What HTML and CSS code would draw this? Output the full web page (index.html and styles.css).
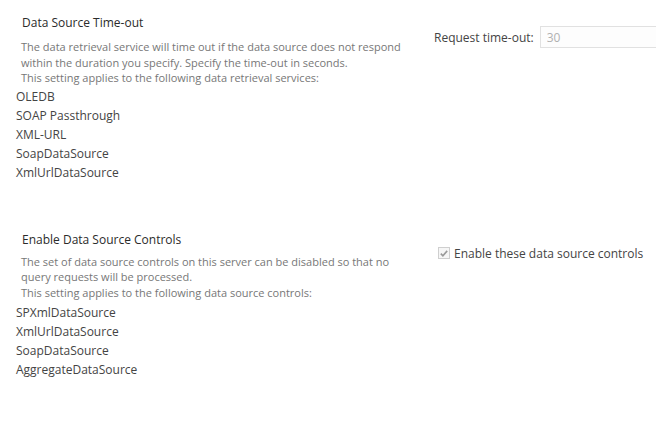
FILE: index.html
```html
<!DOCTYPE html>
<html>
<head>
<meta charset="utf-8">
<link rel="stylesheet" href="styles.css">
</head>
<body>
<div class="page">
  <section class="row first">
    <div class="left">
      <h3 class="title">Data Source Time-out</h3>
      <div class="desc">
        <div>The data retrieval service will time out if the data source does not respond within the duration you specify. Specify the time-out in seconds.</div>
        <div>This setting applies to the following data retrieval services:</div>
      </div>
      <ul class="list">
        <li>OLEDB</li>
        <li>SOAP Passthrough</li>
        <li>XML-URL</li>
        <li>SoapDataSource</li>
        <li>XmlUrlDataSource</li>
      </ul>
    </div>
    <div class="right timeout">
      <label class="field-label" for="to">Request time-out:</label>
      <input id="to" class="field" type="text" value="30" disabled>
    </div>
  </section>
  <section class="row second">
    <div class="left">
      <h3 class="title">Enable Data Source Controls</h3>
      <div class="desc">
        <div>The set of data source controls on this server can be disabled so that no query requests will be processed.</div>
        <div>This setting applies to the following data source controls:</div>
      </div>
      <ul class="list">
        <li>SPXmlDataSource</li>
        <li>XmlUrlDataSource</li>
        <li>SoapDataSource</li>
        <li>AggregateDataSource</li>
      </ul>
    </div>
    <div class="right enable">
      <span class="check"><svg width="11" height="11" viewBox="0 0 11 11"><path d="M2 5.6 L4.3 8 L9 2.6" fill="none" stroke="#9a9a9a" stroke-width="1.8"/></svg></span>
      <span class="check-label">Enable these data source controls</span>
    </div>
  </section>
</div>
</body>
</html>
```

FILE: styles.css
```css
html, body {
  margin: 0;
  padding: 0;
  background: #ffffff;
}
body {
  font-family: "Open Sans", "Noto Sans", sans-serif;
  color: #444444;
  width: 656px;
  height: 421px;
  overflow: hidden;
}
.page {
  display: flex;
  flex-direction: column;
}
.row {
  display: flex;
}
.row.first {
  padding-top: 15px;
}
.row.second {
  padding-top: 50px;
}
.left {
  width: 418px;
  flex: none;
}
.title {
  margin: 0;
  padding-left: 22px;
  font-size: 12px;
  line-height: 16px;
  font-weight: 400;
  color: #2b2b2b;
}
.desc {
  margin-top: 8px;
  padding-left: 21px;
  padding-right: 10px;
  font-size: 11px;
  line-height: 15.5px;
  color: #777777;
}
.second .desc {
  margin-top: 6px;
}
.list {
  list-style: none;
  margin: 1px 0 0 0;
  padding: 0 0 0 16px;
  font-size: 12px;
  line-height: 19px;
  color: #444444;
}
.second .list {
  margin-top: 3px;
}
.right {
  display: flex;
  align-items: center;
  padding-left: 16px;
  flex: none;
  white-space: nowrap;
}
.timeout {
  align-self: flex-start;
  margin-top: 11px;
}
.field-label {
  font-size: 12px;
  color: #444444;
  margin-right: 6px;
}
.field {
  box-sizing: border-box;
  width: 140px;
  height: 22px;
  border: 1px solid #e1e1e1;
  background: #fdfdfd;
  color: #b1b1b1;
  font-family: inherit;
  font-size: 12px;
  padding: 0 6px;
  margin: 0;
  outline: none;
}
.enable {
  align-self: flex-start;
  margin-top: 13px;
  padding-left: 20px;
}
.check {
  box-sizing: border-box;
  width: 12px;
  height: 12px;
  border: 1px solid #cfcfcf;
  background: #f6f6f6;
  display: flex;
  align-items: center;
  justify-content: center;
  margin-right: 4px;
}
.check svg {
  display: block;
}
.check-label {
  font-size: 12px;
  color: #444444;
}
```
